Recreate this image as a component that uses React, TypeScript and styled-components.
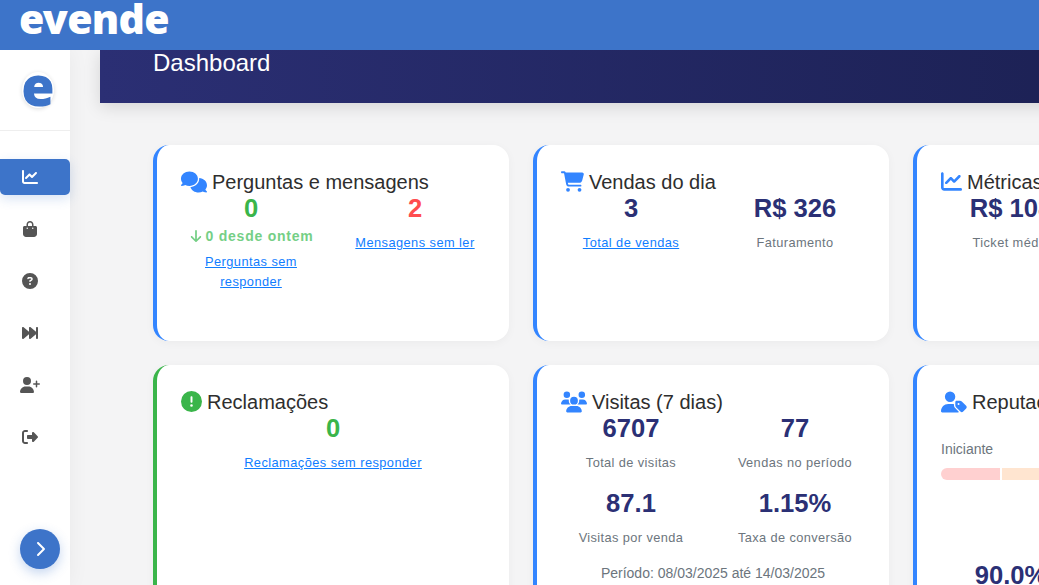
import React from "react";
import styled, { createGlobalStyle } from "styled-components";
import {
  FaArrowDown, FaBagShopping, FaCartShopping, FaChartLine, FaChevronRight, FaCircleExclamation, FaCircleQuestion,
  FaComments, FaForwardFast, FaRightFromBracket, FaUserPlus, FaUsers, FaUserTag,
} from "react-icons/fa6";

const Global = createGlobalStyle`
  html, body { margin: 0; padding: 0; height: 100%; overflow: hidden; }
  body { font-family: "Liberation Sans", Arial, sans-serif; background: #f4f4f5; color: #2e2e2e; }
  * { box-sizing: border-box; }
`;

const Page = styled.div`
  width: 1039px; height: 585px; overflow: hidden; display: flex; flex-direction: column;
`;
const Header = styled.header`
  height: 50px; flex: none; background: #3d74c9; padding-left: 19px; display: flex; align-items: flex-start;
  position: relative; z-index: 3;
`;
const Logo = styled.div`
  font-family: "Noto Sans", sans-serif; font-weight: 900; font-size: 41px; line-height: 36px; color: #fff;
  letter-spacing: -0.7px;
`;
const Body = styled.div`
  flex: 1; display: flex; min-height: 0;
`;
const Sidebar = styled.aside`
  width: 70px; flex: none; background: #fff; display: flex; flex-direction: column; box-shadow: 0 0 20px rgba(0,0,0,.05);
  position: relative; z-index: 2;
`;
const Brand = styled.div`
  height: 81px; flex: none; border-bottom: 1px solid #eee; display: flex; align-items: center; justify-content: center;
  padding-bottom: 1px; padding-left: 6px;
`;
const BrandMark = styled.div`
  width: 32px; height: 36px; border-radius: 50%; background: #fff; box-shadow: 0 1px 4px rgba(0,0,0,.14);
  display: flex; align-items: center; justify-content: center;
  font-family: "Noto Sans", sans-serif; font-weight: 900; font-size: 54px; line-height: 36px; color: #3d74c9;
  padding-bottom: 10px;
`;
const Nav = styled.nav`
  display: flex; flex-direction: column; gap: 16px; margin-top: 28px;
`;
const NavItem = styled.div<{ $active?: boolean }>`
  height: 36px; display: flex; align-items: center; justify-content: center; font-size: 16px; padding-right: 10px;
  border-radius: 0 5px 5px 5px;
  color: ${(p) => (p.$active ? "#fff" : "#555")};
  background: ${(p) => (p.$active ? "#3d74c9" : "transparent")};
  box-shadow: ${(p) => (p.$active ? "0 4px 12px rgba(61,116,201,.2)" : "none")};
`;
const Toggle = styled.button`
  width: 40px; height: 40px; border: 0; border-radius: 50%; background: #3d74c9; color: #fff;
  margin: auto 0 16px 20px; flex: none; display: flex; align-items: center; justify-content: center; font-size: 16px;
  box-shadow: 0 4px 12px rgba(61,116,201,.3); padding: 0;
`;
const Main = styled.main`
  flex: 1; min-width: 0; overflow: hidden; position: relative;
`;
const Banner = styled.div`
  height: 53px; margin-left: 30px; padding-left: 53px; width: 1000px; color: #fff; font-size: 24px; line-height: 26px;
  background: linear-gradient(90deg, #2b2f74, #1c2154);
  box-shadow: 0 4px 16px rgba(0,0,0,.13);
`;
const Grid = styled.div`
  display: grid; grid-template-columns: repeat(3, 356px); gap: 24px; padding: 42px 0 0 83px;
`;
const Card = styled.section<{ $accent?: string }>`
  height: 196px; background: #fff; border-radius: 16px; border-left: 4px solid ${(p) => p.$accent ?? "#3385ff"};
  padding: 24px 24px 0; box-shadow: 0 2px 10px rgba(0,0,0,.04);
  overflow: hidden;
  &:nth-child(n + 4) { height: 260px; }
`;
const Title = styled.h2<{ $color?: string }>`
  margin: 0; height: 25px; font-size: 20px; font-weight: 400; line-height: 27px; color: #2e2e2e; display: flex; align-items: flex-start; gap: 5px;
  white-space: nowrap;
  svg { color: ${(p) => p.$color ?? "#3385ff"}; font-size: 20px; flex: none; align-self: center; }
`;
const Stats = styled.div`
  display: grid; grid-template-columns: 164px 164px; margin: 0 -12px;
`;
const Full = styled.div`
  margin: 0 -12px; text-align: center;
`;
const Stat = styled.div`
  text-align: center; padding: 0 12px 15.5px; min-width: 0;
`;
const Value = styled.div<{ $color?: string }>`
  font-size: 25.6px; font-weight: 700; line-height: 30px; color: ${(p) => p.$color ?? "#2b3075"}; margin: -1px 0 10px; white-space: nowrap;
`;
const Delta = styled.div`
  font-size: 14px; font-weight: 700; color: #75cf86; line-height: 20px; margin: -7px 0 6px; letter-spacing: 0.75px;
  display: flex; justify-content: center; align-items: center; gap: 3px; white-space: nowrap;
  svg { font-size: 14px; }
`;
const Link = styled.a`
  font-size: 12.8px; line-height: 20px; color: #107dff; text-decoration: underline; letter-spacing: 0.45px;
`;
const Label = styled.div`
  font-size: 12.8px; line-height: 20px; color: #6c757d; letter-spacing: 0.4px; white-space: nowrap;
`;
const StackedLink = styled(Link)`
  display: block;
`;
const Period = styled.div`
  font-size: 14px; line-height: 20px; color: #6c757d; text-align: center;
`;
const RepName = styled.div`
  font-size: 14px; line-height: 20px; color: #6c757d; margin: 25px 0 9px;
`;
const Meter = styled.div`
  display: flex; gap: 2px; height: 12px; border-radius: 6px; overflow: hidden;
`;
const Segment = styled.div<{ $color: string }>`
  flex: 1; background: ${(p) => p.$color};
`;
const RepValue = styled(Value)`
  text-align: center; margin: 80px 0 0 -12px; width: 164px;
`;

export default function App() {
  return (
    <Page>
      <Global />
      <Header><Logo>evende</Logo></Header>
      <Body>
        <Sidebar>
          <Brand><BrandMark>e</BrandMark></Brand>
          <Nav>
            <NavItem $active><FaChartLine /></NavItem>
            <NavItem><FaBagShopping /></NavItem>
            <NavItem><FaCircleQuestion /></NavItem>
            <NavItem><FaForwardFast /></NavItem>
            <NavItem><FaUserPlus size={20} /></NavItem>
            <NavItem><FaRightFromBracket /></NavItem>
          </Nav>
          <Toggle aria-label="Expandir"><FaChevronRight /></Toggle>
        </Sidebar>
        <Main>
          <Banner>Dashboard</Banner>
          <Grid>
            <Card>
              <Title><FaComments size={26} />Perguntas e mensagens</Title>
              <Stats>
                <Stat>
                  <Value $color="#3ab54a">0</Value>
                  <Delta><FaArrowDown />0 desde ontem</Delta>
                  <StackedLink href="#">Perguntas sem responder</StackedLink>
                </Stat>
                <Stat>
                  <Value $color="#ff4d4f">2</Value>
                  <Link href="#">Mensagens sem ler</Link>
                </Stat>
              </Stats>
            </Card>
            <Card>
              <Title><FaCartShopping size={23} />Vendas do dia</Title>
              <Stats>
                <Stat><Value>3</Value><Link href="#">Total de vendas</Link></Stat>
                <Stat><Value>R$ 326</Value><Label>Faturamento</Label></Stat>
              </Stats>
            </Card>
            <Card>
              <Title><FaChartLine size={21} />Métricas de vendas</Title>
              <Stats>
                <Stat><Value>R$ 108</Value><Label>Ticket médio</Label></Stat>
              </Stats>
            </Card>
            <Card $accent="#3ab54a">
              <Title $color="#3ab54a"><FaCircleExclamation size={21} />Reclamações</Title>
              <Full>
                <Value $color="#3ab54a">0</Value>
                <Link href="#">Reclamações sem responder</Link>
              </Full>
            </Card>
            <Card>
              <Title><FaUsers size={26} />Visitas (7 dias)</Title>
              <Stats>
                <Stat><Value>6707</Value><Label>Total de visitas</Label></Stat>
                <Stat><Value>77</Value><Label>Vendas no período</Label></Stat>
                <Stat><Value>87.1</Value><Label>Visitas por venda</Label></Stat>
                <Stat><Value>1.15%</Value><Label>Taxa de conversão</Label></Stat>
              </Stats>
              <Period>Período: 08/03/2025 até 14/03/2025</Period>
            </Card>
            <Card>
              <Title><FaUserTag size={26} />Reputação</Title>
              <RepName>Iniciante</RepName>
              <Meter>
                <Segment $color="#ffd0d0" />
                <Segment $color="#ffe5d0" />
                <Segment $color="#fff3cd" />
                <Segment $color="#d4edda" />
                <Segment $color="#c3e6cb" />
              </Meter>
              <RepValue>90.0%</RepValue>
            </Card>
          </Grid>
        </Main>
      </Body>
    </Page>
  );
}
